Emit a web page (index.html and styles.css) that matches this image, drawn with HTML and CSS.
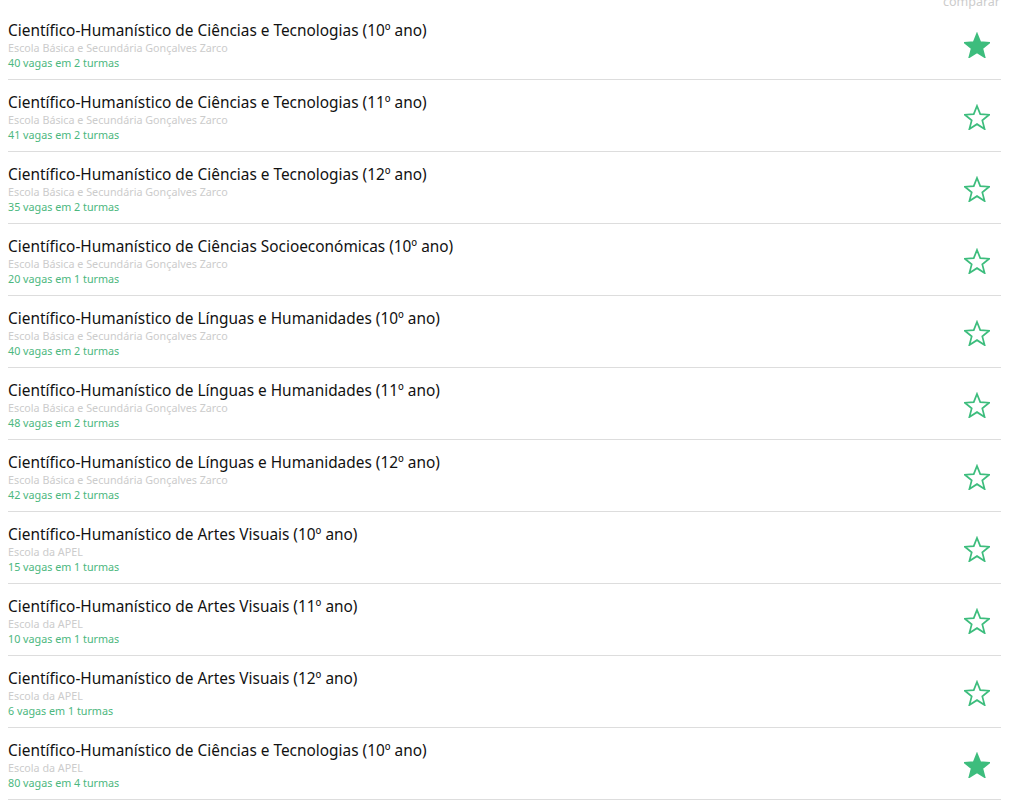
FILE: index.html
```html
<!DOCTYPE html>
<html lang="pt">
<head>
<meta charset="utf-8">
<link rel="stylesheet" href="styles.css">
</head>
<body>
<div class="head"><span class="compare">comparar</span></div>
<ul class="list">
  <li class="row"><div class="info"><div class="title">Científico-Humanístico de Ciências e Tecnologias (10º ano)</div><div class="school">Escola Básica e Secundária Gonçalves Zarco</div><div class="vagas">40 vagas em 2 turmas</div></div><svg class="star on" viewBox="0 0 24 24"><path d="M12 1.8l3 7.6 8.2.5-6.3 5.2 2.1 8-7-4.5-7 4.5 2.1-8L.8 9.9 9 9.4z"/></svg></li>
  <li class="row"><div class="info"><div class="title">Científico-Humanístico de Ciências e Tecnologias (11º ano)</div><div class="school">Escola Básica e Secundária Gonçalves Zarco</div><div class="vagas">41 vagas em 2 turmas</div></div><svg class="star" viewBox="0 0 24 24"><path d="M12 1.8l3 7.6 8.2.5-6.3 5.2 2.1 8-7-4.5-7 4.5 2.1-8L.8 9.9 9 9.4z"/></svg></li>
  <li class="row"><div class="info"><div class="title">Científico-Humanístico de Ciências e Tecnologias (12º ano)</div><div class="school">Escola Básica e Secundária Gonçalves Zarco</div><div class="vagas">35 vagas em 2 turmas</div></div><svg class="star" viewBox="0 0 24 24"><path d="M12 1.8l3 7.6 8.2.5-6.3 5.2 2.1 8-7-4.5-7 4.5 2.1-8L.8 9.9 9 9.4z"/></svg></li>
  <li class="row"><div class="info"><div class="title">Científico-Humanístico de Ciências Socioeconómicas (10º ano)</div><div class="school">Escola Básica e Secundária Gonçalves Zarco</div><div class="vagas">20 vagas em 1 turmas</div></div><svg class="star" viewBox="0 0 24 24"><path d="M12 1.8l3 7.6 8.2.5-6.3 5.2 2.1 8-7-4.5-7 4.5 2.1-8L.8 9.9 9 9.4z"/></svg></li>
  <li class="row"><div class="info"><div class="title">Científico-Humanístico de Línguas e Humanidades (10º ano)</div><div class="school">Escola Básica e Secundária Gonçalves Zarco</div><div class="vagas">40 vagas em 2 turmas</div></div><svg class="star" viewBox="0 0 24 24"><path d="M12 1.8l3 7.6 8.2.5-6.3 5.2 2.1 8-7-4.5-7 4.5 2.1-8L.8 9.9 9 9.4z"/></svg></li>
  <li class="row"><div class="info"><div class="title">Científico-Humanístico de Línguas e Humanidades (11º ano)</div><div class="school">Escola Básica e Secundária Gonçalves Zarco</div><div class="vagas">48 vagas em 2 turmas</div></div><svg class="star" viewBox="0 0 24 24"><path d="M12 1.8l3 7.6 8.2.5-6.3 5.2 2.1 8-7-4.5-7 4.5 2.1-8L.8 9.9 9 9.4z"/></svg></li>
  <li class="row"><div class="info"><div class="title">Científico-Humanístico de Línguas e Humanidades (12º ano)</div><div class="school">Escola Básica e Secundária Gonçalves Zarco</div><div class="vagas">42 vagas em 2 turmas</div></div><svg class="star" viewBox="0 0 24 24"><path d="M12 1.8l3 7.6 8.2.5-6.3 5.2 2.1 8-7-4.5-7 4.5 2.1-8L.8 9.9 9 9.4z"/></svg></li>
  <li class="row"><div class="info"><div class="title">Científico-Humanístico de Artes Visuais (10º ano)</div><div class="school">Escola da APEL</div><div class="vagas">15 vagas em 1 turmas</div></div><svg class="star" viewBox="0 0 24 24"><path d="M12 1.8l3 7.6 8.2.5-6.3 5.2 2.1 8-7-4.5-7 4.5 2.1-8L.8 9.9 9 9.4z"/></svg></li>
  <li class="row"><div class="info"><div class="title">Científico-Humanístico de Artes Visuais (11º ano)</div><div class="school">Escola da APEL</div><div class="vagas">10 vagas em 1 turmas</div></div><svg class="star" viewBox="0 0 24 24"><path d="M12 1.8l3 7.6 8.2.5-6.3 5.2 2.1 8-7-4.5-7 4.5 2.1-8L.8 9.9 9 9.4z"/></svg></li>
  <li class="row"><div class="info"><div class="title">Científico-Humanístico de Artes Visuais (12º ano)</div><div class="school">Escola da APEL</div><div class="vagas">6 vagas em 1 turmas</div></div><svg class="star" viewBox="0 0 24 24"><path d="M12 1.8l3 7.6 8.2.5-6.3 5.2 2.1 8-7-4.5-7 4.5 2.1-8L.8 9.9 9 9.4z"/></svg></li>
  <li class="row"><div class="info"><div class="title">Científico-Humanístico de Ciências e Tecnologias (10º ano)</div><div class="school">Escola da APEL</div><div class="vagas">80 vagas em 4 turmas</div></div><svg class="star on" viewBox="0 0 24 24"><path d="M12 1.8l3 7.6 8.2.5-6.3 5.2 2.1 8-7-4.5-7 4.5 2.1-8L.8 9.9 9 9.4z"/></svg></li>
</ul>
</body>
</html>
```
FILE: styles.css
```css
html, body { margin: 0; padding: 0; background: #fff; }
body { padding: 0 8px; font-family: "Noto Sans", "Open Sans", sans-serif; overflow: hidden; }
.head { height: 8px; display: flex; justify-content: flex-end; align-items: flex-end; }
.compare { font-size: 12.5px; line-height: 16px; color: #ccc; margin-bottom: -2px; padding-right: 1px; }
.list { list-style: none; margin: 0; padding: 0; width: 993px; }
.row { display: flex; align-items: center; justify-content: space-between; height: 71px; border-bottom: 1px solid #ddd; box-sizing: content-box; }
.info { padding-top: 5px; }
.title { font-size: 15.4px; line-height: 20px; color: #111; }
.school { font-size: 10.75px; line-height: 15px; color: #ccc; }
.vagas { font-size: 10.75px; line-height: 15px; color: #4cb77e; }
.star { width: 26px; height: 26px; margin-right: 11px; margin-top: 2px; fill: none; stroke: #3dbd7d; stroke-width: 1.6; stroke-linejoin: miter; }
.star.on { fill: #3dbd7d; stroke: #3dbd7d; }
```
